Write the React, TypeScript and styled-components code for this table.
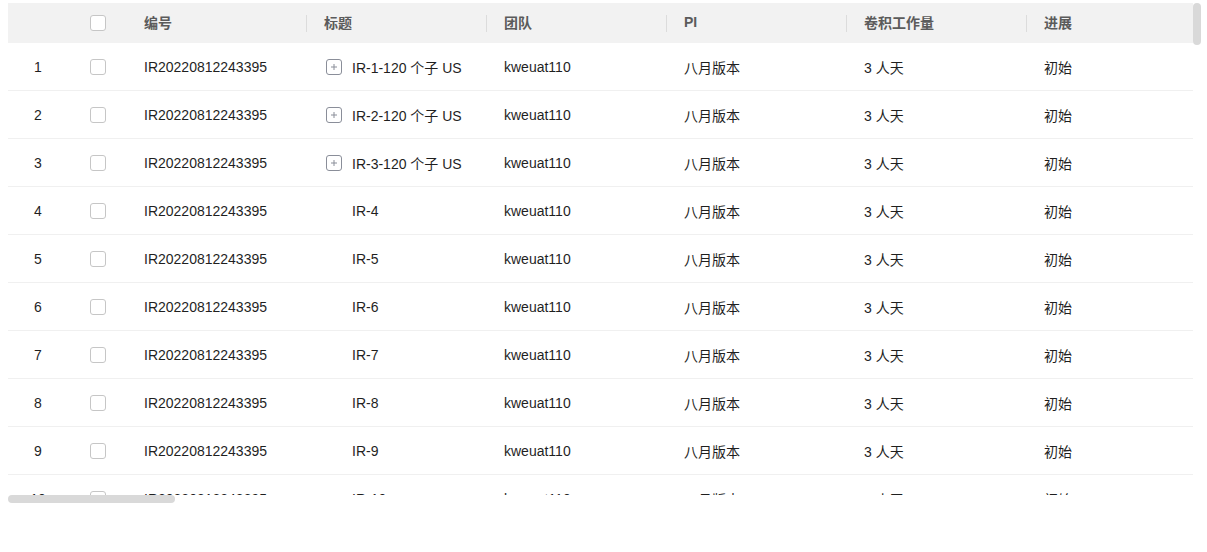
import React from "react";
import styled, { createGlobalStyle } from "styled-components";

const Global = createGlobalStyle`
  html, body { margin: 0; padding: 0; background: #fff; }
  body { font-family: "Liberation Sans", Arial, "Noto Sans CJK SC", sans-serif; }
`;

const Page = styled.div`
  padding: 3px 6px 0 8px;
`;

const Frame = styled.div`
  display: grid;
  grid-template-columns: 1185px 8px;
  grid-template-rows: 492px 8px;
  width: 1193px;
`;

const Viewport = styled.div`
  overflow: hidden;
`;

const VTrack = styled.div`
  display: flex;
  flex-direction: column;
`;

const HTrack = styled.div`
  display: flex;
`;

const VThumb = styled.div`
  width: 8px;
  height: 42px;
  border-radius: 4px;
  background: #d9d9d9;
`;

const HThumb = styled.div`
  width: 167px;
  height: 8px;
  border-radius: 4px;
  background: #d9d9d9;
`;

const Table = styled.div`
  width: 8408px;
`;

const COLS = "60px 58px 180px 180px 180px 180px 180px 180px 1fr";

const HeadRow = styled.div`
  display: grid;
  grid-template-columns: ${COLS};
  height: 40px;
  background: #f2f2f2;
  align-items: center;
`;

const HeadCell = styled.div<{ $divider?: boolean; $pad?: number; $check?: boolean }>`
  position: relative;
  box-sizing: border-box;
  height: 40px;
  display: flex;
  align-items: center;
  padding-left: ${(p) => p.$pad ?? 18}px;
  padding-bottom: ${(p) => (p.$check ? 0 : 3)}px;
  font-size: 14px;
  font-weight: 700;
  color: #5b5b5b;
  &::before {
    content: "";
    display: ${(p) => (p.$divider ? "block" : "none")};
    position: absolute;
    left: 0;
    top: 12px;
    width: 1px;
    height: 17px;
    background: #dcdcdc;
  }
`;

const Row = styled.div`
  display: grid;
  grid-template-columns: ${COLS};
  height: 48px;
  box-sizing: border-box;
  border-bottom: 1px solid #f0f0f0;
  align-items: center;
`;

const Cell = styled.div<{ $pad?: number; $center?: boolean }>`
  display: flex;
  align-items: center;
  justify-content: ${(p) => (p.$center ? "center" : "flex-start")};
  padding-left: ${(p) => (p.$center ? 0 : p.$pad ?? 18)}px;
  font-size: 14px;
  color: #1f1f1f;
  white-space: nowrap;
`;

const Check = styled.span`
  display: inline-block;
  box-sizing: border-box;
  width: 16px;
  height: 16px;
  border: 1px solid #c6c6c6;
  border-radius: 3px;
  background: #fff;
`;

const Expand = styled.span`
  display: inline-flex;
  align-items: center;
  justify-content: center;
  box-sizing: border-box;
  width: 16px;
  height: 16px;
  border: 1px solid #8a8e99;
  border-radius: 3px;
  margin-right: 10px;
`;

const Spacer = styled.span`
  display: inline-block;
  width: 26px;
`;

const rows = Array.from({ length: 120 }, (_, i) => i + 1);

export default function App() {
  return (
    <>
      <Global />
      <Page>
        <Frame>
          <Viewport>
            <Table>
              <HeadRow>
                <HeadCell />
                <HeadCell $pad={22} $check>
                  <Check />
                </HeadCell>
                <HeadCell>编号</HeadCell>
                <HeadCell $divider>标题</HeadCell>
                <HeadCell $divider>团队</HeadCell>
                <HeadCell $divider>PI</HeadCell>
                <HeadCell $divider>卷积工作量</HeadCell>
                <HeadCell $divider>进展</HeadCell>
                <HeadCell />
              </HeadRow>
              {rows.map((n) => (
                <Row key={n}>
                  <Cell $center>{n}</Cell>
                  <Cell $pad={22}>
                    <Check />
                  </Cell>
                  <Cell>IR20220812243395</Cell>
                  <Cell $pad={20}>
                    {n <= 3 ? (
                      <>
                        <Expand>
                          <svg width="8" height="8" viewBox="0 0 8 8">
                            <path d="M4 1v6M1 4h6" stroke="#8a8e99" strokeWidth="1" />
                          </svg>
                        </Expand>
                        {`IR-${n}-120 个子 US`}
                      </>
                    ) : (
                      <>
                        <Spacer />
                        {`IR-${n}`}
                      </>
                    )}
                  </Cell>
                  <Cell>kweuat110</Cell>
                  <Cell>八月版本</Cell>
                  <Cell>3 人天</Cell>
                  <Cell>初始</Cell>
                  <Cell />
                </Row>
              ))}
            </Table>
          </Viewport>
          <VTrack>
            <VThumb />
          </VTrack>
          <HTrack>
            <HThumb />
          </HTrack>
        </Frame>
      </Page>
    </>
  );
}
